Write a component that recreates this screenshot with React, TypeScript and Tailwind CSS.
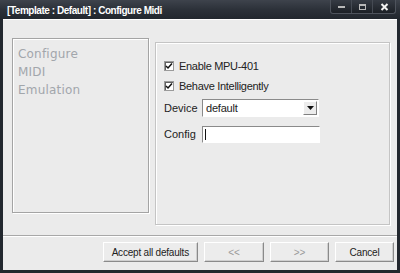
import React, { useState } from "react";

const ui = { fontFamily: '"Liberation Sans", Arial, sans-serif' };

const Check = ({ label }: { label: string }) => {
  const [on, setOn] = useState(true);
  return (
    <label className="flex items-center h-[20px] cursor-default" onClick={() => setOn(!on)}>
      <span className="w-[10px] h-[10px] bg-white border border-[#9a9a9a] shadow-[inset_1px_1px_0_#606060] flex items-center justify-center">
        {on && (
          <svg width="8" height="8" viewBox="0 0 8 8">
            <path d="M1 4 L3 6 L7 1.5" stroke="#111" strokeWidth="1.5" fill="none" />
          </svg>
        )}
      </span>
      <span className="ml-[5px] text-[11px] text-[#222] tracking-[-0.3px]">{label}</span>
    </label>
  );
};

const Btn = ({ children, dim }: { children: React.ReactNode; dim?: boolean }) => (
  <button
    className={`h-[20px] bg-[#ececec] border border-t-white border-l-white border-r-[#8a8a8a] border-b-[#8a8a8a] shadow-[inset_-1px_-1px_0_#cfcfcf] text-[10px] tracking-[-0.2px] ${
      dim ? "text-[#9a9a9a]" : "text-[#222]"
    }`}
  >
    {children}
  </button>
);

export default function App() {
  return (
    <div className="w-[400px] h-[273px] bg-[#22272e] flex flex-col overflow-hidden" style={ui}>
      {/* title bar */}
      <div className="h-[19px] flex items-start justify-between bg-gradient-to-b from-[#3e434c] via-[#2c3139] to-[#22272e]">
        <div className="pl-[7px] pt-[3px] text-white font-bold text-[10px] tracking-[-0.45px]">
          [Template : Default] : Configure Midi
        </div>
        <div className="flex h-[14px] mr-[4px] rounded-b-[3px] border border-t-0 border-[#4e535c] bg-gradient-to-b from-[#363b44] to-[#1c2026]">
          <div className="w-[21px] flex items-center justify-center border-r border-[#454a53]">
            <div className="w-[7px] h-[2px] bg-[#b8b8b8]" />
          </div>
          <div className="w-[21px] flex items-center justify-center border-r border-[#454a53]">
            <div className="w-[7px] h-[6px] border border-[#b8b8b8] border-t-2" />
          </div>
          <div className="w-[22px] flex items-center justify-center">
            <svg width="9" height="8" viewBox="0 0 9 8">
              <path d="M1.5 1 L7.5 7 M7.5 1 L1.5 7" stroke="#f2f2f2" strokeWidth="2" />
            </svg>
          </div>
        </div>
      </div>

      {/* client area */}
      <div className="flex-1 mx-[3px] mb-[3px] bg-[#ebebeb] border-t border-white flex flex-col">
        <div className="h-[215px] flex items-start pl-[9px] pt-[18px] gap-[6px]">
          <div className="w-[137px] h-[175px] border border-[#a4a4a4] shadow-[inset_1px_1px_0_#fff,1px_1px_0_#fff] p-[6px] pl-[5px]">
            <div
              className="text-[12px] leading-[18px] text-[#a2a6ab] tracking-[0.2px]"
              style={{ fontFamily: '"Comic Sans MS", "DejaVu Sans", sans-serif' }}
            >
              <div>Configure</div>
              <div>MIDI</div>
              <div>Emulation</div>
            </div>
          </div>
          <div className="mt-[4px] w-[235px] h-[183px] border border-[#c4c4c4] shadow-[inset_1px_1px_0_#fff,1px_1px_0_#fff] pl-[8px] pt-[13px]">
            <Check label="Enable MPU-401" />
            <Check label="Behave Intelligently" />
            <div className="flex items-center mt-[2px] h-[20px]">
              <span className="w-[38px] text-[11px] text-[#222]">Device</span>
              <div className="w-[117px] h-[18px] bg-white border border-t-[#8a8a8a] border-l-[#8a8a8a] border-r-white border-b-white flex items-center justify-between">
                <span className="pl-[3px] text-[11px] text-[#222] tracking-[-0.2px]">default</span>
                <span className="w-[14px] h-[14px] mr-[1px] bg-[#ececec] border border-t-white border-l-white border-r-[#808080] border-b-[#808080] flex items-center justify-center">
                  <svg width="7" height="4" viewBox="0 0 7 4">
                    <path d="M0 0 H7 L3.5 4 Z" fill="#111" />
                  </svg>
                </span>
              </div>
            </div>
            <div className="flex items-center mt-[6px] h-[20px]">
              <span className="w-[38px] text-[11px] text-[#222]">Config</span>
              <div className="w-[118px] h-[17px] bg-white border border-t-[#8a8a8a] border-l-[#8a8a8a] border-r-white border-b-white flex items-center pl-[2px]">
                <div className="w-[1px] h-[11px] bg-[#111]" />
              </div>
            </div>
          </div>
        </div>

        <div className="border-t border-[#a8a8a8] shadow-[0_1px_0_#fff]" />

        <div className="flex-1 flex items-center justify-end gap-[6px] pr-[3px] pb-[2px]">
          <Btn>
            <span className="px-[8px]">Accept all defaults</span>
          </Btn>
          <div className="w-[60px] flex"><Btn dim><span className="w-[58px] block">&lt;&lt;</span></Btn></div>
          <div className="w-[59px] flex"><Btn dim><span className="w-[57px] block">&gt;&gt;</span></Btn></div>
          <div className="w-[59px] flex"><Btn><span className="w-[57px] block">Cancel</span></Btn></div>
        </div>
      </div>
    </div>
  );
}
